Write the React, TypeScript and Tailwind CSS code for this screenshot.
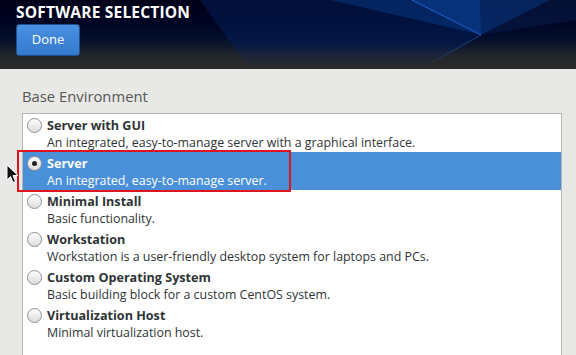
import React from "react";

type Env = { title: string; desc: string };

const envs: Env[] = [
  { title: "Server with GUI", desc: "An integrated, easy-to-manage server with a graphical interface." },
  { title: "Server", desc: "An integrated, easy-to-manage server." },
  { title: "Minimal Install", desc: "Basic functionality." },
  { title: "Workstation", desc: "Workstation is a user-friendly desktop system for laptops and PCs." },
  { title: "Custom Operating System", desc: "Basic building block for a custom CentOS system." },
  { title: "Virtualization Host", desc: "Minimal virtualization host." },
];

function Radio({ checked }: { checked: boolean }) {
  return (
    <div className="w-[15px] h-[15px] rounded-full border border-[#8f8f8f] bg-gradient-to-b from-white to-[#dcdcdc] flex items-center justify-center shrink-0">
      {checked ? <div className="w-[5px] h-[5px] rounded-full bg-[#222]" /> : null}
    </div>
  );
}

function Row({ env, selected }: { env: Env; selected: boolean }) {
  return (
    <div
      className={
        "h-[38px] flex items-start pl-[4px] pt-[3px] gap-[5px] " +
        (selected ? "bg-[#4a90d9] text-white" : "text-[#2e3436]")
      }
    >
      <div className="pt-[1px]">
        <Radio checked={selected} />
      </div>
      <div className="flex flex-col leading-[17px]">
        <div className="font-bold text-[12.6px]">{env.title}</div>
        <div className="text-[12.4px]">{env.desc}</div>
      </div>
    </div>
  );
}

export default function App() {
  return (
    <div className="w-[576px] h-[355px] overflow-hidden bg-[#e8e8e7] font-['Open_Sans',sans-serif] relative">
      <div className="relative h-[69px] bg-gradient-to-b from-[#000018] via-[#020a2a] to-[#2b2b2b] overflow-hidden">
        <svg className="absolute inset-0" width="576" height="69" viewBox="0 0 576 69">
          <polygon points="330,0 480,0 481,35 " fill="#05357f" opacity="0.7" />
          <polygon points="410,0 550,0 481,35" fill="#0a3c8c" opacity="0.6" />
          <polygon points="550,0 576,0 576,20 481,35" fill="#081a4a" opacity="0.6" />
          <polygon points="200,0 330,0 481,35 420,69 250,69" fill="#031d55" opacity="0.55" />
          <line x1="412" y1="0" x2="481" y2="35" stroke="#2a6ae0" strokeWidth="1" opacity="0.8" />
          <line x1="481" y1="35" x2="420" y2="69" stroke="#2a6ae0" strokeWidth="1" opacity="0.5" />
          <rect x="0" y="45" width="576" height="24" fill="url(#fade)" />
          <defs>
            <linearGradient id="fade" x1="0" y1="0" x2="0" y2="1">
              <stop offset="0" stopColor="#2b2b2b" stopOpacity="0" />
              <stop offset="1" stopColor="#2b2b2b" stopOpacity="1" />
            </linearGradient>
          </defs>
        </svg>
        <div className="relative pl-[16px] pt-[3px]">
          <div className="text-white font-bold text-[15.5px] leading-[18px] tracking-[0.2px]">SOFTWARE SELECTION</div>
          <button className="mt-[3px] w-[64px] h-[32px] rounded-[3px] border border-[#1d4f8f] bg-gradient-to-b from-[#4a90e2] to-[#3479cc] text-white text-[13px]">
            Done
          </button>
        </div>
      </div>
      <div className="pl-[22px] pr-[14px] pt-[17px]">
        <div className="text-[14.8px] text-[#555753] leading-[20px]">Base Environment</div>
        <div className="mt-[7px] w-[540px] bg-white border border-[#b6b6b3] h-[260px]">
          {envs.map((e, i) => (
            <Row key={e.title} env={e} selected={i === 1} />
          ))}
        </div>
      </div>
      <div className="absolute left-[17px] top-[150px] w-[274px] h-[42px] border-2 border-[#e0141e]" />
      <svg className="absolute left-[6px] top-[164px]" width="13" height="20" viewBox="0 0 13 20">
        <path d="M1 1 L1 16 L4.5 12.5 L7 18.5 L9.5 17.5 L7 11.5 L12 11.5 Z" fill="#111" stroke="#fff" strokeWidth="1" />
      </svg>
    </div>
  );
}
